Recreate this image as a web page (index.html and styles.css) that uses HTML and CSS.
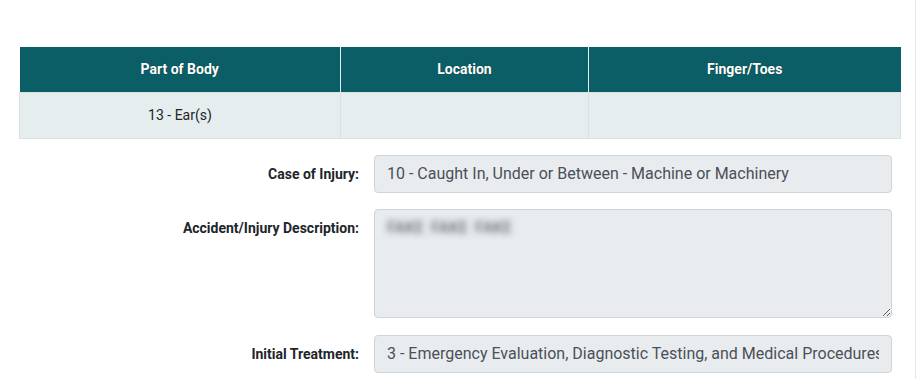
FILE: index.html
```html
<!DOCTYPE html>
<html lang="en">
<head>
    <meta charset="UTF-8">
    <meta name="viewport" content="width=device-width, initial-scale=1.0">
    <title>Injury Details</title>
    <link rel="stylesheet" href="styles.css">
</head>
<body>

    <div class="page">

        <table class="bodytable">
            <thead>
                <tr>
                    <th class="col-part">Part of Body</th>
                    <th class="col-location">Location</th>
                    <th class="col-finger">Finger/Toes</th>
                </tr>
            </thead>
            <tbody>
                <tr>
                    <td>13 - Ear(s)</td>
                    <td></td>
                    <td></td>
                </tr>
            </tbody>
        </table>

        <form class="injuryform">
            <div class="formrow">
                <label class="formlabel" for="cause">Case of Injury:</label>
                <input class="formfield" type="text" id="cause" value="10 - Caught In, Under or Between - Machine or Machinery" readonly>
            </div>

            <div class="formrow formrow-area">
                <label class="formlabel" for="description">Accident/Injury Description:</label>
                <textarea class="formfield formarea" id="description" readonly>FAKE FAKE FAKE</textarea>
            </div>

            <div class="formrow">
                <label class="formlabel" for="treatment">Initial Treatment:</label>
                <input class="formfield" type="text" id="treatment" value="3 - Emergency Evaluation, Diagnostic Testing, and Medical Procedures" readonly>
            </div>
        </form>

    </div>

</body>
</html>
```

FILE: styles.css
```css
* {
    box-sizing: border-box;
    margin: 0;
}

body {
    font-family: 'Roboto', 'Liberation Sans', sans-serif;
    color: #212529;
    background-color: #fff;
}

.page {
    width: 916px;
    height: 379px;
    padding: 47px 15px 0 19px;
    border-right: 1px solid #e6e6e6;
    overflow: hidden;
}

.bodytable {
    width: 882px;
    border-collapse: collapse;
    table-layout: fixed;
    font-size: 14px;
}

.col-part {
    width: 321px;
}

.col-location {
    width: 248px;
}

.bodytable th {
    background-color: #0c5e66;
    color: #fff;
    font-weight: bold;
    text-shadow: 0 0 1px rgba(0, 0, 0, 0.5);
    height: 45px;
    padding: 0 12px;
    line-height: 21px;
    border-left: 1px solid #e8eef0;
}

.bodytable th:first-child {
    border-left: none;
}

.bodytable td {
    background-color: #e5edef;
    height: 46px;
    padding: 0 12px;
    text-align: center;
    line-height: 21px;
    border: 1px solid #dbe1e3;
}

.injuryform {
    padding-top: 16px;
    width: 873px;
}

.formrow {
    display: grid;
    grid-template-columns: 340px 1fr;
    column-gap: 15px;
    margin-bottom: 16px;
}

.formrow-area {
    margin-bottom: 17px;
}

.formlabel {
    text-align: right;
    font-size: 14px;
    font-weight: bold;
    padding-top: 7px;
    line-height: 24px;
}

.formfield {
    font-family: 'Roboto', 'Liberation Sans', sans-serif;
    font-size: 16px;
    line-height: 24px;
    height: 38px;
    padding: 6px 12px;
    color: #495057;
    background-color: #e9ecef;
    border: 1px solid #ced4da;
    border-radius: 4px;
    outline: none;
    width: 100%;
}

.formarea {
    height: 109px;
    color: transparent;
    word-spacing: 3px;
    text-shadow: 0 0 6px rgba(70, 76, 82, 1);
}
```
